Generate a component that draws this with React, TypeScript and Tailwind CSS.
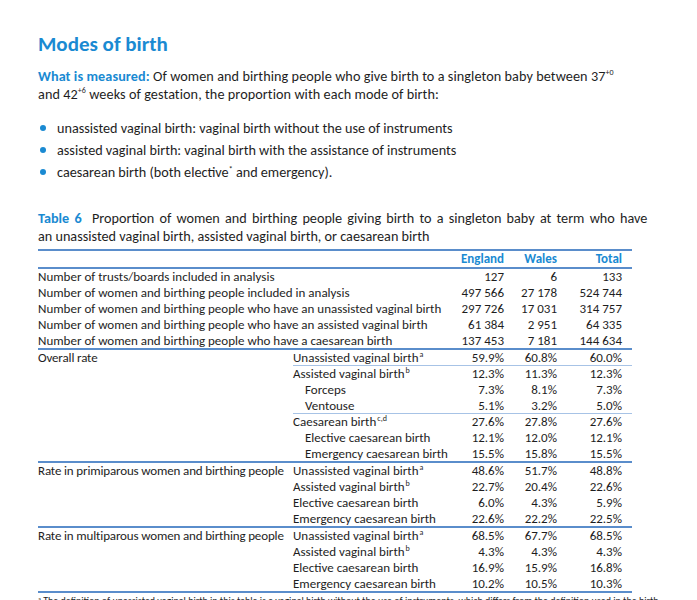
import React from "react";

type Row = {
  label?: string;
  sub: React.ReactNode;
  indent?: boolean;
  values: string[];
  lightLine?: boolean;
};

type Section = { rows: Row[] };

const sup = (t: string) => (
  <sup className="text-[8px] leading-none -top-[5px] ml-[1px]">{t}</sup>
);

const counts: Row[] = [
  { label: "Number of trusts/boards included in analysis", sub: "", values: ["127", "6", "133"] },
  { label: "Number of women and birthing people included in analysis", sub: "", values: ["497 566", "27 178", "524 744"] },
  { label: "Number of women and birthing people who have an unassisted vaginal birth", sub: "", values: ["297 726", "17 031", "314 757"] },
  { label: "Number of women and birthing people who have an assisted vaginal birth", sub: "", values: ["61 384", "2 951", "64 335"] },
  { label: "Number of women and birthing people who have a caesarean birth", sub: "", values: ["137 453", "7 181", "144 634"] },
];

const sections: Section[] = [
  {
    rows: [
      { label: "Overall rate", sub: <>Unassisted vaginal birth{sup("a")}</>, values: ["59.9%", "60.8%", "60.0%"], lightLine: true },
      { sub: <>Assisted vaginal birth{sup("b")}</>, values: ["12.3%", "11.3%", "12.3%"] },
      { sub: "Forceps", indent: true, values: ["7.3%", "8.1%", "7.3%"] },
      { sub: "Ventouse", indent: true, values: ["5.1%", "3.2%", "5.0%"], lightLine: true },
      { sub: <>Caesarean birth{sup("c,d")}</>, values: ["27.6%", "27.8%", "27.6%"] },
      { sub: "Elective caesarean birth", indent: true, values: ["12.1%", "12.0%", "12.1%"] },
      { sub: "Emergency caesarean birth", indent: true, values: ["15.5%", "15.8%", "15.5%"] },
    ],
  },
  {
    rows: [
      { label: "Rate in primiparous women and birthing people", sub: <>Unassisted vaginal birth{sup("a")}</>, values: ["48.6%", "51.7%", "48.8%"] },
      { sub: <>Assisted vaginal birth{sup("b")}</>, values: ["22.7%", "20.4%", "22.6%"] },
      { sub: "Elective caesarean birth", values: ["6.0%", "4.3%", "5.9%"] },
      { sub: "Emergency caesarean birth", values: ["22.6%", "22.2%", "22.5%"] },
    ],
  },
  {
    rows: [
      { label: "Rate in multiparous women and birthing people", sub: <>Unassisted vaginal birth{sup("a")}</>, values: ["68.5%", "67.7%", "68.5%"] },
      { sub: <>Assisted vaginal birth{sup("b")}</>, values: ["4.3%", "4.3%", "4.3%"] },
      { sub: "Elective caesarean birth", values: ["16.9%", "15.9%", "16.8%"] },
      { sub: "Emergency caesarean birth", values: ["10.2%", "10.5%", "10.3%"] },
    ],
  },
];

const numPad = ["pr-[4px]", "pr-[4px]", "pr-[10px]"];

const App: React.FC = () => {
  return (
    <div className="w-[697px] h-[600px] overflow-hidden bg-white font-['Carlito','Lato',sans-serif] text-[#1e1e1e]">
      <div className="pl-[38px] pr-[20px] pt-[32px]">
        <h1 className="text-[21px] leading-[24px] font-bold text-[#1a8ad2]">Modes of birth</h1>

        <p className="mt-[11px] text-[14.2px] leading-[18px] whitespace-nowrap tracking-[0.08px]">
          <span className="font-bold text-[#1a8ad2]">What is measured:</span> Of women and birthing
          people who give birth to a singleton baby between 37
          <sup className="text-[8px] leading-none -top-[6px]">+0</sup>
          <br />
          and 42<sup className="text-[8px] leading-none -top-[6px]">+6</sup> weeks of gestation,
          the proportion with each mode of birth:
        </p>

        <ul className="mt-[14px] text-[14.2px] leading-[22px] whitespace-nowrap">
          {[
            <>unassisted vaginal birth: vaginal birth without the use of instruments</>,
            <>assisted vaginal birth: vaginal birth with the assistance of instruments</>,
            <>
              caesarean birth (both elective
              <sup className="text-[8px] leading-none -top-[5px]">*</sup> and emergency).
            </>,
          ].map((t, i) => (
            <li key={i} className="flex items-center">
              <span className="w-[6px] h-[6px] rounded-full bg-[#1a8ad2] ml-[2px] mr-[11px]" />
              <span>{t}</span>
            </li>
          ))}
        </ul>

        <p className="mt-[26px] text-[14.2px] leading-[18px] whitespace-nowrap">
          <span className="[word-spacing:2px]">
            <span className="font-bold text-[#1a8ad2]">Table 6</span>&nbsp; Proportion of women
            and birthing people giving birth to a singleton baby at term who have
          </span>
          <br />
          an unassisted vaginal birth, assisted vaginal birth, or caesarean birth
        </p>

        <table className="mt-[4px] w-[594px] border-collapse table-fixed text-[13px] leading-[16px]">
          <colgroup>
            <col className="w-[255px]" />
            <col className="w-[162px]" />
            <col className="w-[53px]" />
            <col className="w-[53px]" />
            <col className="w-[71px]" />
          </colgroup>
          <thead>
            <tr className="border-t-2 border-b-2 border-[#5a8dcb]">
              <th className="h-[16px]" />
              <th />
              <th className="text-right font-bold text-[#1a8ad2] pr-[4px]">England</th>
              <th className="text-right font-bold text-[#1a8ad2] pr-[4px]">Wales</th>
              <th className="text-right font-bold text-[#1a8ad2] pr-[10px]">Total</th>
            </tr>
          </thead>
          <tbody className="border-b-2 border-[#5a8dcb]">
            {counts.map((r, i) => (
              <tr key={i} className={i === counts.length - 1 ? "leading-[15px]" : ""}>
                <td colSpan={2} className="whitespace-nowrap p-0">
                  {r.label}
                </td>
                {r.values.map((v, j) => (
                  <td key={j} className={`text-right whitespace-nowrap p-0 ${numPad[j]}`}>
                    {v}
                  </td>
                ))}
              </tr>
            ))}
          </tbody>
          {sections.map((s, si) => (
            <tbody key={si} className="border-b-2 border-[#5a8dcb]">
              {s.rows.map((r, i) => (
                <tr
                  key={i}
                  className={
                    r.lightLine || i === s.rows.length - 1 ? "leading-[15px]" : ""
                  }
                >
                  <td className="whitespace-nowrap p-0 align-top tracking-[-0.15px]">
                    {r.label ?? ""}
                  </td>
                  <td
                    className={`whitespace-nowrap p-0 ${r.indent ? "pl-[12px]" : ""} ${
                      r.lightLine ? "border-b border-[#a7c3e6]" : ""
                    }`}
                  >
                    {r.sub}
                  </td>
                  {r.values.map((v, j) => (
                    <td
                      key={j}
                      className={`text-right whitespace-nowrap p-0 ${numPad[j]} ${
                        r.lightLine ? "border-b border-[#a7c3e6]" : ""
                      }`}
                    >
                      {v}
                    </td>
                  ))}
                </tr>
              ))}
            </tbody>
          ))}
        </table>

        <p className="mt-[2px] text-[10px] leading-[12px] whitespace-nowrap">
          <sup className="text-[6px]">a</sup> The definition of unassisted vaginal birth in this
          table is a vaginal birth without the use of instruments, which differs from the
          definition used in the birth
        </p>
      </div>
    </div>
  );
};

export default App;
